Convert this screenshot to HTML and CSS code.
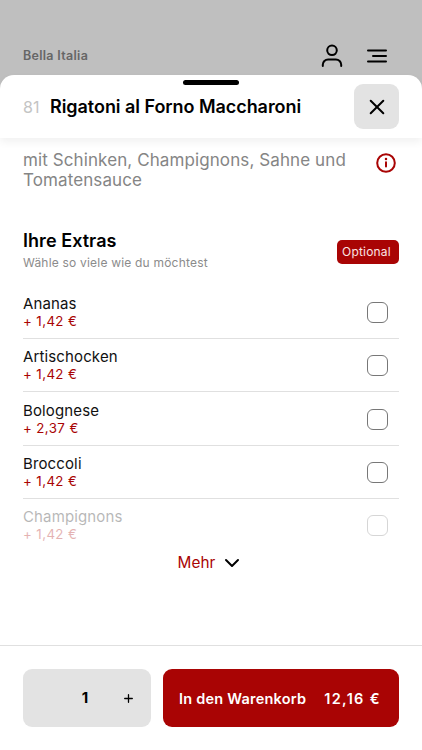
FILE: index.html
```html
<!DOCTYPE html>
<html lang="de">
<head>
<meta charset="utf-8">
<meta name="viewport" content="width=device-width, initial-scale=1">
<title>Bella Italia</title>
<link rel="stylesheet" href="styles.css">
</head>
<body>
<div class="app">
  <header class="topbar">
    <span class="brand">Bella Italia</span>
    <svg class="user" width="24" height="26" viewBox="0 0 24 26"><circle cx="12" cy="7.3" r="4.8"/><path d="M2.8 23v-1.2a5.3 5.3 0 0 1 5.3-5.3h7.8a5.3 5.3 0 0 1 5.3 5.3V23"/></svg>
    <svg class="menu" width="22" height="16" viewBox="0 0 22 16"><path d="M2 2.5h18M7 8h13M2 13.5h18"/></svg>
  </header>
  <main class="sheet">
    <div class="sheet-head">
      <span class="grip"></span>
      <span class="number">81</span>
      <h1 class="title">Rigatoni al Forno Maccharoni</h1>
      <button class="close" aria-label="Schließen"><svg width="16" height="16" viewBox="0 0 16 16"><path d="M1.7 1.7l12.6 12.6M14.3 1.7L1.7 14.3"/></svg></button>
    </div>
    <div class="content">
      <div class="description">
        <p>mit Schinken, Champignons, Sahne und<br>Tomatensauce</p>
        <svg class="info" width="20" height="20" viewBox="0 0 20 20"><circle cx="10" cy="10" r="8.8"/><path d="M10 9.3v4.2"/><circle class="dot" cx="10" cy="6.1" r="1.25"/></svg>
      </div>
      <div class="extras-head">
        <div>
          <h2>Ihre Extras</h2>
          <p class="hint">Wähle so viele wie du möchtest</p>
        </div>
        <span class="badge">Optional</span>
      </div>
      <ul class="extras">
        <li><div><p class="name">Ananas</p><p class="price">+ 1,42 €</p></div><span class="check"></span></li>
        <li><div><p class="name">Artischocken</p><p class="price">+ 1,42 €</p></div><span class="check"></span></li>
        <li><div><p class="name">Bolognese</p><p class="price">+ 2,37 €</p></div><span class="check"></span></li>
        <li><div><p class="name">Broccoli</p><p class="price">+ 1,42 €</p></div><span class="check"></span></li>
        <li class="faded"><div><p class="name">Champignons</p><p class="price">+ 1,42 €</p></div><span class="check"></span></li>
      </ul>
      <div class="more"><span>Mehr</span><svg width="16" height="10" viewBox="0 0 16 10"><path d="M2 2l6 6 6-6"/></svg></div>
    </div>
    <footer class="actions">
      <div class="stepper"><span></span><b>1</b><svg width="9" height="9" viewBox="0 0 9 9"><path d="M.7 4.5h7.6M4.5.7v7.6"/></svg></div>
      <button class="cart"><span>In den Warenkorb</span><span class="total">12,16 €</span></button>
    </footer>
  </main>
</div>
</body>
</html>
```
FILE: styles.css
```css
* { box-sizing: border-box; margin: 0; padding: 0; }
body { font-family: Inter, "Liberation Sans", sans-serif; color: #111; background: #bfbfbf; }
svg { display: block; fill: none; stroke: #000; stroke-width: 2; stroke-linecap: round; stroke-linejoin: round; flex: none; }
button { border: 0; font: inherit; }
.app { width: 422px; height: 750px; overflow: hidden; display: flex; flex-direction: column; }
.topbar { height: 75px; flex: none; padding: 37px 34px 0 23px; display: flex; align-items: center; }
.brand { flex: 1; font-size: 12.5px; font-weight: 600; letter-spacing: .3px; color: #666; padding-bottom: 2px; }
.menu { margin-left: 22px; }
.sheet { flex: 1; min-height: 0; background: #fff; border-radius: 14px 14px 0 0; display: flex; flex-direction: column; }
.sheet-head { position: relative; height: 63px; flex: none; padding: 0 23px; display: flex; align-items: center; box-shadow: 0 4px 9px rgba(0,0,0,.06); border-radius: 14px 14px 0 0; }
.grip { position: absolute; top: 5px; left: 183px; width: 56px; height: 5px; border-radius: 3px; background: #000; }
.number { width: 27px; font-size: 16px; color: #c4c4c4; }
.title { flex: 1; font-size: 18px; font-weight: 600; line-height: 22px; letter-spacing: -.05px; color: #000; white-space: nowrap; }
.close { width: 45px; height: 45px; border-radius: 9px; background: #e3e3e3; display: flex; align-items: center; justify-content: center; }
.content { flex: 1; padding: 12px 23px 0; }
.description { display: flex; justify-content: space-between; align-items: flex-start; font-size: 17px; line-height: 20px; letter-spacing: .1px; color: #858585; white-space: nowrap; }
.info { stroke: #a90404; margin: 3px 3px 0 0; }
.info .dot { fill: #a90404; stroke: none; }
.extras-head { display: flex; justify-content: space-between; align-items: flex-start; margin-top: 39px; height: 56px; }
h2 { font-size: 18px; line-height: 24px; font-weight: 600; color: #000; letter-spacing: .05px; }
.hint { font-size: 12px; line-height: 16px; margin-top: 2px; letter-spacing: .2px; color: #8b8b8b; }
.badge { width: 62px; height: 24px; margin-top: 11px; border-radius: 5px; background: #a90404; color: #fbe5e5; font-size: 12px; line-height: 24px; padding-left: 5px; letter-spacing: .2px; }
.extras { list-style: none; padding-top: .5px; }
.extras li { height: 53.35px; padding-top: 8.5px; display: flex; justify-content: space-between; align-items: flex-start; border-bottom: 1px solid #e0e0e0; }
.extras .faded { border: 0; opacity: .3; height: 53px; padding-top: 8px; }
.name { font-size: 15px; line-height: 19px; letter-spacing: .13px; }
.price { font-size: 13.3px; line-height: 16px; color: #a90404; letter-spacing: .4px; }
.check { width: 21px; height: 21px; margin: 8px 11px 0 0; border: 1px solid #777; border-radius: 6px; }
.more { display: flex; justify-content: center; align-items: center; gap: 9px; padding: 1px 4px 0 0; color: #a90404; font-size: 15.3px; line-height: 20px; letter-spacing: .1px; }
.actions { height: 105px; flex: none; border-top: 1px solid #e0e0e0; padding: 23px 23px 0; display: flex; gap: 12px; }
.stepper { width: 128px; height: 58px; border-radius: 9px; background: #e3e3e3; display: grid; grid-template-columns: 41px 42px 45px; align-items: center; justify-items: center; font-size: 15px; color: #000; }
.stepper b { padding-bottom: 2px; }
.stepper svg { stroke-width: 1.3; }
.cart { width: 236px; height: 58px; border-radius: 9px; background: #a90404; color: #fff; display: flex; align-items: center; justify-content: space-between; padding: 0 19px 0 16px; font-size: 14.5px; font-weight: 600; letter-spacing: .22px; white-space: nowrap; }
.total { letter-spacing: 1.3px; margin-right: -.8px; }
```
